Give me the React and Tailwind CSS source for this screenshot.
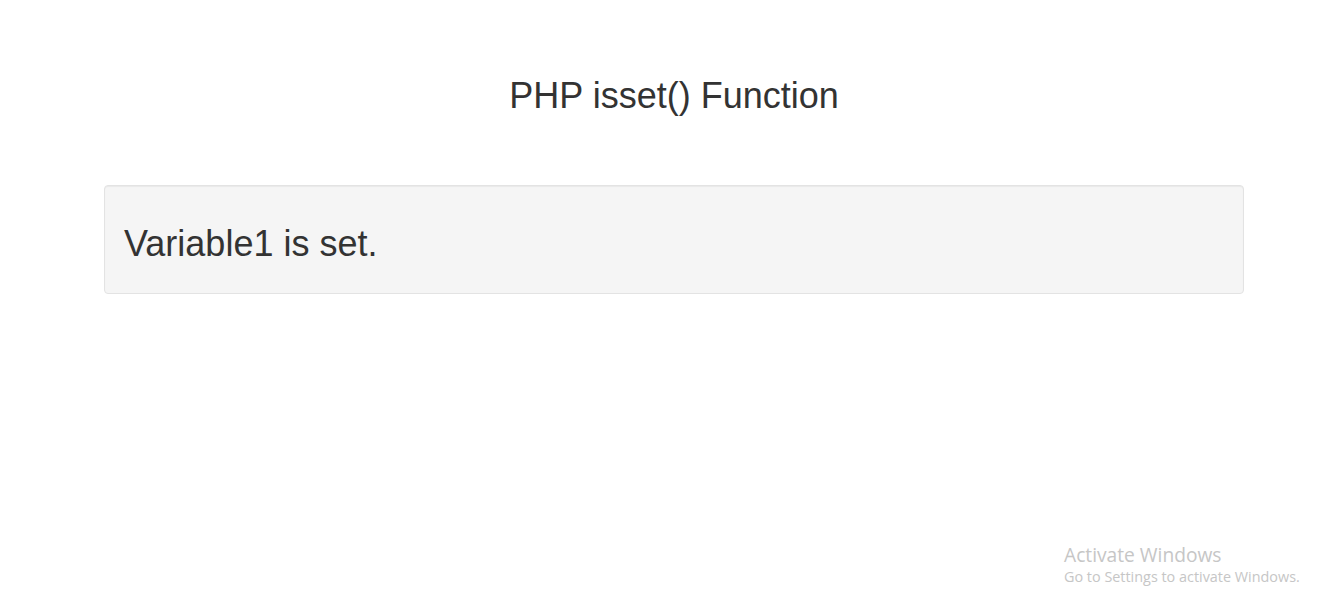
import React from 'react';

export default function App() {
  return (
    <div className="relative w-full h-[612px] bg-white text-[#333] font-['Liberation_Sans',Arial,sans-serif] overflow-hidden">
      <div className="flex flex-col items-center pt-[76px] pl-[4px]">
        <h1 className="text-[36px] leading-[40px] font-normal">PHP isset() Function</h1>
      </div>
      <div className="mx-[104px] mt-[69px] w-[1140px] h-[109px] bg-[#f5f5f5] border border-[#e3e3e3] rounded-[4px] shadow-[inset_0_1px_1px_rgba(0,0,0,0.05)] pt-[38px] px-[19px]">
        <p className="text-[36px] leading-[40px]">Variable1 is set.</p>
      </div>

      {/* windows watermark */}
      <div className="absolute left-[1064px] top-[542px] font-['Open_Sans','Noto_Sans',sans-serif] text-[#c6c6c6]">
        <div className="text-[19.2px] leading-[25px]">Activate Windows</div>
        <div className="text-[14.4px] leading-[20px]">Go to Settings to activate Windows.</div>
      </div>
    </div>
  );
}
